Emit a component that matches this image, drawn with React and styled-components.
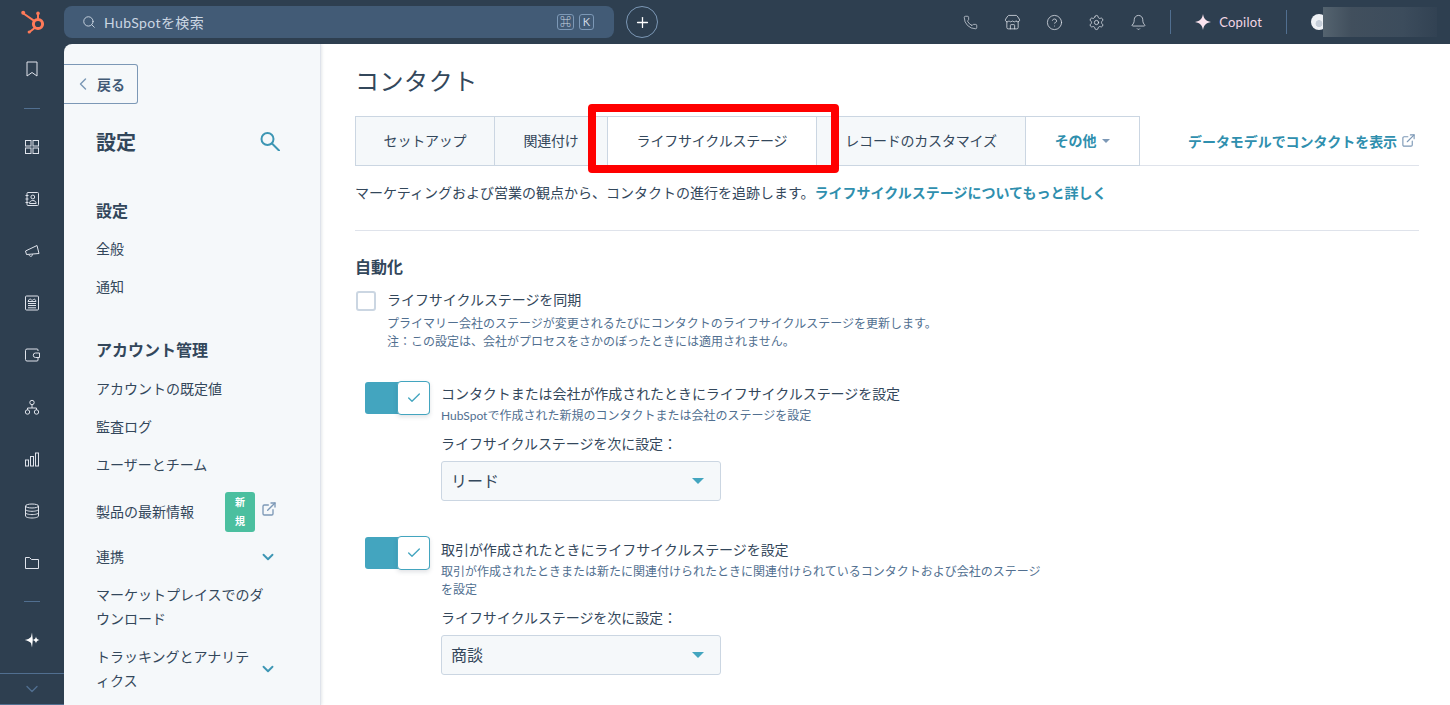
import React from 'react';
import styled, { createGlobalStyle } from 'styled-components';
import { ChevronDown, ChevronLeft, Search, Phone, Store, CircleHelp, Settings, Bell, Plus, Check, ExternalLink } from 'lucide-react';

const GlobalStyle = createGlobalStyle`
  html, body { margin: 0; padding: 0; height: 100%; overflow: hidden; }
  body { font-family: Lato, "Noto Sans CJK JP", sans-serif; color: #33475b; background: #fff; }
`;

const Page = styled.div`
  position: relative;
  width: 1450px;
  height: 705px;
  overflow: hidden;
  background: #2e3f50;
`;

const TopBar = styled.header`
  height: 44px;
  display: flex;
  align-items: center;
`;

const LogoCell = styled.div`
  width: 64px;
  height: 44px;
  box-sizing: border-box;
  padding: 9px 0 0 19px;
`;

const SearchBox = styled.div`
  width: 550px;
  height: 32px;
  box-sizing: border-box;
  background: #425b76;
  border-radius: 8px;
  display: flex;
  align-items: center;
  padding: 0 20px 0 18px;
  color: #cbd6e2;
  font-size: 14px;
  gap: 8px;
`;

const SearchText = styled.span`
  flex: 1;
  padding-bottom: 1px;
  letter-spacing: 0.4px;
`;

const Kbd = styled.span`
  width: ${p => p.$w}px;
  height: 16px;
  box-sizing: border-box;
  border: 1px solid #7c98b6;
  border-radius: 3px;
  font-size: 11px;
  line-height: 14px;
  text-align: center;
  margin-left: -3px;
`;

const PlusButton = styled.button`
  width: 32px;
  height: 32px;
  margin-left: 12px;
  padding: 0;
  background: transparent;
  border: 1px solid #7c98b6;
  border-radius: 50%;
  color: #fff;
  display: flex;
  align-items: center;
  justify-content: center;
`;

const TopRight = styled.div`
  margin-left: auto;
  display: flex;
  align-items: center;
  color: #dfe3eb;
  height: 44px;
`;

const TopIcon = styled.div`
  width: 42px;
  display: flex;
  justify-content: center;
`;

const VLine = styled.div`
  width: 1px;
  height: 24px;
  margin-left: ${p => p.$ml || 0}px;
  background: #516f90;
`;

const CopilotWrap = styled.div`
  display: flex;
  align-items: center;
  gap: 8px;
  padding: 0 24px;
  color: #f3d6e4;
  font-size: 13px;
  letter-spacing: 0.2px;
`;

const AccountWrap = styled.div`
  width: 139px;
  height: 30px;
  margin-left: 24px;
  display: flex;
  align-items: center;
  position: relative;
`;

const Avatar = styled.div`
  width: 16px;
  height: 16px;
  border-radius: 50%;
  background: radial-gradient(circle at 50% 60%, #c5ced9 0 25%, #eef1f5 30%);
`;

const Blur = styled.div`
  position: absolute;
  left: 12px;
  top: 0;
  width: 114px;
  height: 30px;
  background: linear-gradient(90deg, #54636f 0%, #414f5d 25%, #3c4c5c 70%, #324253 100%);
`;

const Body = styled.div`
  display: flex;
  height: 661px;
`;

const Rail = styled.nav`
  width: 64px;
  flex: none;
  display: flex;
  flex-direction: column;
  align-items: center;
  color: #dfe3eb;
`;

const RailItem = styled.div`
  height: 52px;
  width: 64px;
  flex: none;
  display: flex;
  align-items: center;
  justify-content: center;
`;

const RailTop = styled(RailItem)`
  height: 50px;
`;

const RailSep = styled.div`
  width: 16px;
  height: 1px;
  flex: none;
  background: #516f90;
  margin: ${p => p.$m};
`;

const RailFoot = styled.div`
  margin-top: auto;
  width: 64px;
  height: 32px;
  box-sizing: border-box;
  border-top: 1px solid #516f90;
  border-bottom: 1px solid #516f90;
  display: flex;
  align-items: center;
  justify-content: center;
  color: #516f90;
`;

const Side = styled.aside`
  width: 257px;
  flex: none;
  box-sizing: border-box;
  background: #f5f8fa;
  border-top-left-radius: 8px;
  border-right: 1px solid #dfe3eb;
  box-shadow: 1px 0 3px rgba(45, 62, 80, 0.12);
  z-index: 1;
  overflow: hidden;
  padding-top: 20px;
`;

const BackButton = styled.div`
  width: 74px;
  height: 40px;
  box-sizing: border-box;
  border: 1px solid #7c98b6;
  border-left: none;
  border-radius: 0 3px 3px 0;
  display: flex;
  align-items: center;
  padding-left: 9px;
  gap: 4px;
  font-size: 14px;
  font-weight: 700;
  color: #425b76;
`;

const SideHead = styled.div`
  display: flex;
  align-items: center;
  justify-content: space-between;
  margin: 17px 40px 0 32px;
  height: 40px;
`;

const SideTitle = styled.h1`
  margin: 0;
  font-size: 20px;
  font-weight: 700;
  color: #33475b;
`;

const SideSection = styled.h2`
  margin: ${p => p.$top}px 0 0 32px;
  font-size: 16px;
  line-height: 24px;
  font-weight: 700;
  color: #33475b;
`;

const SideItem = styled.div`
  display: flex;
  align-items: center;
  justify-content: space-between;
  margin: ${p => p.$mt || 0}px 0 0 32px;
  width: ${p => p.$w || 208}px;
  min-height: 38px;
  font-size: 14px;
  line-height: 24px;
  color: #33475b;
`;

const SideText = styled.span`
  flex: 1;
  padding: ${p => p.$pad || 0}px 0;
  max-width: ${p => p.$max || 'none'};
`;

const NewBadge = styled.span`
  width: 30px;
  height: 40px;
  flex: none;
  box-sizing: border-box;
  padding: 1px 8px;
  border-radius: 3px;
  background: #4bbf9f;
  color: #fff;
  font-size: 10px;
  font-weight: 700;
  line-height: 19px;
  text-align: center;
  margin-right: 6px;
`;

const LinkIconUp = styled.span`
  display: flex;
  margin: -7px -1px 0 0;
  color: #7c98b6;
`;

const Main = styled.main`
  flex: 1;
  background: #fff;
  padding: 0 31px 0 34px;
  overflow: hidden;
`;

const PageTitle = styled.h1`
  margin: 21px 0 0;
  font-size: 24px;
  line-height: 32px;
  font-weight: 400;
  letter-spacing: 0.55px;
  color: #33475b;
`;

const TabsRow = styled.div`
  display: flex;
  align-items: flex-start;
  margin-top: 19px;
  height: 49px;
  border-bottom: 1px solid #dfe3eb;
`;

const Tab = styled.div`
  box-sizing: border-box;
  height: 50px;
  padding-bottom: 2px;
  display: flex;
  align-items: center;
  justify-content: center;
  gap: 6px;
  width: ${p => p.$w}px;
  font-size: 14px;
  letter-spacing: -0.2px;
  color: ${p => (p.$more ? '#2f8fae' : '#33475b')};
  font-weight: ${p => (p.$more ? 700 : 400)};
  background: ${p => (p.$active || p.$more ? '#fff' : '#f5f8fa')};
  border: 1px solid #cbd6e2;
  border-left-width: ${p => (p.$first ? 1 : 0)}px;
`;

const Caret = styled.span`
  width: 0;
  height: 0;
  border-left: 4px solid transparent;
  border-right: 4px solid transparent;
  border-top: 4px solid #7c98b6;
  margin-top: 1px;
`;

const DataLink = styled.a`
  margin-left: auto;
  align-self: center;
  display: flex;
  align-items: center;
  gap: 4px;
  padding-right: 3px;
  font-size: 14px;
  letter-spacing: -0.07px;
  font-weight: 700;
  color: #2f8fae;
`;

const Lead = styled.p`
  margin: 15px 0 0;
  font-size: 14px;
  line-height: 24px;
  color: #33475b;
`;

const LeadLink = styled.a`
  font-weight: 700;
  color: #2f8fae;
`;

const Rule = styled.hr`
  margin: 25px 0 0;
  border: none;
  border-top: 1px solid #dfe3eb;
`;

const SectionTitle = styled.h2`
  margin: 24px 0 0;
  font-size: 16px;
  line-height: 24px;
  font-weight: 700;
  color: #33475b;
`;

const CheckRow = styled.div`
  display: flex;
  gap: 11px;
  margin: 11px 0 0 1px;
`;

const CheckBox = styled.span`
  width: 20px;
  height: 20px;
  flex: none;
  box-sizing: border-box;
  margin-top: 1px;
  background: #fff;
  border: 2px solid #cbd6e2;
  border-radius: 3px;
`;

const OptLabel = styled.div`
  font-size: 14px;
  line-height: 20px;
  letter-spacing: -0.06px;
  color: #33475b;
`;

const OptHelp = styled.div`
  margin-top: ${p => p.$mt || 0}px;
  font-size: 12px;
  line-height: 18px;
  color: #516f90;
`;

const ToggleRow = styled.div`
  display: flex;
  gap: 11px;
  margin: ${p => p.$top}px 0 0 10px;
`;

const Toggle = styled.div`
  width: 65px;
  height: 32px;
  flex: none;
  position: relative;
  background: #43a5bf;
  border-radius: 3px;
`;

const ToggleKnob = styled.span`
  position: absolute;
  right: 0;
  top: -1px;
  width: 33px;
  height: 34px;
  box-sizing: border-box;
  background: #fff;
  border: 1px solid #43a5bf;
  border-radius: 4px;
  box-shadow: 0 2px 4px rgba(45, 62, 80, 0.15);
  display: flex;
  align-items: center;
  justify-content: center;
  color: #43a5bf;
`;

const ToggleBody = styled.div`
  width: 604px;
  padding-top: ${p => p.$pt}px;
`;

const FieldLabel = styled.div`
  margin-top: 9px;
  font-size: 14px;
  line-height: 20px;
  letter-spacing: -0.06px;
  color: #33475b;
`;

const Select = styled.div`
  margin-top: 7px;
  width: 280px;
  height: 40px;
  box-sizing: border-box;
  padding: 0 16px 2px 9px;
  display: flex;
  align-items: center;
  justify-content: space-between;
  background: #f5f8fa;
  border: 1px solid #cbd6e2;
  border-radius: 3px;
  font-size: 16px;
  color: #33475b;
`;

const SelectCaret = styled.span`
  width: 0;
  height: 0;
  margin-top: 2px;
  border-left: 6px solid transparent;
  border-right: 6px solid transparent;
  border-top: 6px solid #43a5bf;
`;

const Highlight = styled.div`
  position: absolute;
  left: 588px;
  top: 104px;
  width: 251px;
  height: 69px;
  box-sizing: border-box;
  border: 8px solid #ff0000;
  border-radius: 4px;
  pointer-events: none;
`;

const Sprocket = () => (
  <svg width="26" height="26" viewBox="0 0 26 26" fill="none" stroke="#ff7a59">
    <circle cx="19" cy="15" r="4.6" strokeWidth="3" />
    <path d="M19 9.500V5M15.200 11.800 4.500 4.500M15 19.500l-4.500 3.500" strokeWidth="2" strokeLinecap="round" />
    <circle cx="19" cy="4.400" r="1.800" fill="#ff7a59" stroke="none" />
    <circle cx="4.200" cy="3.800" r="2" fill="#ff7a59" stroke="none" />
    <circle cx="10.200" cy="23" r="1.600" fill="#ff7a59" stroke="none" />
  </svg>
);

const Sparkle = ({ size, color }) => (
  <svg width={size} height={size} viewBox="0 0 16 16" fill={color}>
    <path d="M8 0c.7 4.600 2.600 6.900 8 8-5.400 1.100-7.300 3.400-8 8-.7-4.600-2.600-6.900-8-8 5.400-1.100 7.300-3.400 8-8z" />
  </svg>
);

const RailIcon = ({ children }) => (
  <svg width="16" height="16" viewBox="0 0 16 16" fill="none" stroke="currentColor" strokeWidth="1">
    {children}
  </svg>
);

const SearchGlass = () => (
  <svg width="20" height="20" viewBox="0 0 20 20" fill="none" stroke="#3d96b4" strokeWidth="2">
    <circle cx="7.500" cy="8" r="6" />
    <path d="M12 12.500 19 19.500" strokeLinecap="round" />
  </svg>
);

const railIcons = [
  <>
    <rect x="3" y="1.500" width="11.500" height="13" rx="1" />
    <circle cx="8.800" cy="6" r="1.900" />
    <path d="M5.500 12.500c0-2 1.400-3 3.300-3s3.300 1 3.300 3zM1.500 4.500h3M1.500 8h3M1.500 11.500h3" />
  </>,
  <>
    <path d="M1.500 8 13 2.500l2 8-12.500 1z" strokeLinejoin="round" />
    <path d="M5 11.500c.3 2.500 3.500 2.500 3.500-.3" />
  </>,
  <>
    <rect x="1.500" y="1" width="13" height="14" rx="1" />
    <path d="M4 6.500c1-2.500 2-3 3-2s1.500 1 2.500 0 2 0 2.500 2zM4 8.500h8M4 10.500h8M4 12.800h8" />
  </>,
  <>
    <path d="M14 4V3a1 1 0 0 0-1-1H3A1.500 1.500 0 0 0 1.500 3.500v9A1.500 1.500 0 0 0 3 14h10a1 1 0 0 0 1-1v-2.500" />
    <path d="M15.500 6H11.500a2 2 0 0 0 0 4.500h4z" />
  </>,
  <>
    <circle cx="8" cy="3.500" r="2.200" />
    <circle cx="3.500" cy="13" r="2.200" />
    <circle cx="12.500" cy="13" r="2.200" />
    <path d="M8 5.700V9M3.500 10.800V9h9v1.800" />
  </>,
  <>
    <rect x="1.500" y="9" width="3" height="6" />
    <rect x="6.500" y="5.500" width="3" height="9.500" />
    <rect x="11.500" y="2" width="3" height="13" />
  </>,
  <>
    <ellipse cx="8" cy="3" rx="6.500" ry="2" />
    <path d="M1.500 3v10c0 1.100 2.900 2 6.500 2s6.500-.9 6.500-2V3M1.500 6.300c0 1.100 2.900 2 6.500 2s6.500-.9 6.500-2M1.500 9.600c0 1.100 2.900 2 6.500 2s6.500-.9 6.500-2" />
  </>,
  <path d="M1.500 2.500v11h13v-9H7.500l-2-2z" />,
];

const App = () => (
  <Page>
    <GlobalStyle />
    <TopBar>
      <LogoCell><Sprocket /></LogoCell>
      <SearchBox>
        <Search size={14} strokeWidth={1.6} />
        <SearchText>HubSpotを検索</SearchText>
        <Kbd $w={17}>⌘</Kbd>
        <Kbd $w={15}>K</Kbd>
      </SearchBox>
      <PlusButton aria-label="作成"><Plus size={17} strokeWidth={1.8} /></PlusButton>
      <TopRight>
        <TopIcon><Phone size={15} strokeWidth={1.1} /></TopIcon>
        <TopIcon><Store size={17} strokeWidth={1.1} /></TopIcon>
        <TopIcon><CircleHelp size={17} strokeWidth={1.1} /></TopIcon>
        <TopIcon><Settings size={17} strokeWidth={1.1} /></TopIcon>
        <TopIcon><Bell size={17} strokeWidth={1.1} /></TopIcon>
        <VLine $ml={11} />
        <CopilotWrap><Sparkle size={16} color="#fbe3ee" />Copilot</CopilotWrap>
        <VLine />
        <AccountWrap>
          <Avatar />
          <Blur />
        </AccountWrap>
      </TopRight>
    </TopBar>
    <Body>
      <Rail>
        <RailTop>
          <RailIcon><path d="M3 1h10v14l-5-3.500L3 15z" /></RailIcon>
        </RailTop>
        <RailSep $m="14px 0 12px" />
        <RailItem>
          <RailIcon>
            <rect x="1.500" y="1.500" width="5.500" height="5.500" />
            <rect x="9" y="1.500" width="5.500" height="5.500" />
            <rect x="1.500" y="9" width="5.500" height="5.500" />
            <rect x="9" y="9" width="5.500" height="5.500" />
          </RailIcon>
        </RailItem>
        {railIcons.map((icon, i) => (
          <RailItem key={i}><RailIcon>{icon}</RailIcon></RailItem>
        ))}
        <RailSep $m="12px 0" />
        <RailItem>
          <svg width="16" height="16" viewBox="0 0 16 16" fill="#fff">
            <path d="M8 .5 8.800 8 8 15.500 7 11C5.500 9.500 3.500 8.500.8 8 3.500 7.500 5.500 6.500 7 5z" />
            <path d="M12 4.500c.3 2 1 3 3.500 3.500-2.500.5-3.200 1.500-3.500 3.500-.3-2-1-3-3.500-3.500 2.500-.5 3.200-1.500 3.500-3.500z" />
          </svg>
        </RailItem>
        <RailFoot><ChevronDown size={20} strokeWidth={1.6} /></RailFoot>
      </Rail>
      <Side>
        <BackButton><ChevronLeft size={20} color="#7c98b6" strokeWidth={1.7} />戻る</BackButton>
        <SideHead>
          <SideTitle>設定</SideTitle>
          <SearchGlass />
        </SideHead>
        <SideSection $top={38}>設定</SideSection>
        <SideItem $mt={7}><SideText>全般</SideText></SideItem>
        <SideItem><SideText>通知</SideText></SideItem>
        <SideSection $top={32}>アカウント管理</SideSection>
        <SideItem $mt={8}><SideText>アカウントの既定値</SideText></SideItem>
        <SideItem><SideText>監査ログ</SideText></SideItem>
        <SideItem><SideText>ユーザーとチーム</SideText></SideItem>
        <SideItem $w={180} $mt={8}>
          <SideText>製品の最新情報</SideText>
          <NewBadge>新規</NewBadge>
          <LinkIconUp><ExternalLink size={16} strokeWidth={2} /></LinkIconUp>
        </SideItem>
        <SideItem $w={181} $mt={6}>
          <SideText>連携</SideText>
          <ChevronDown size={18} color="#3d96b4" strokeWidth={2.5} />
        </SideItem>
        <SideItem $w={170}><SideText $pad={7}>マーケットプレイスでのダウンロード</SideText></SideItem>
        <SideItem $w={181}>
          <SideText $pad={7} $max="160px">トラッキングとアナリティクス</SideText>
          <ChevronDown size={18} color="#3d96b4" strokeWidth={2.5} />
        </SideItem>
      </Side>
      <Main>
        <PageTitle>コンタクト</PageTitle>
        <TabsRow>
          <Tab $first $w={140}>セットアップ</Tab>
          <Tab $w={113}>関連付け</Tab>
          <Tab $active $w={209}>ライフサイクルステージ</Tab>
          <Tab $w={209}>レコードのカスタマイズ</Tab>
          <Tab $more $w={114}>その他<Caret /></Tab>
          <DataLink>データモデルでコンタクトを表示<ExternalLink size={15} strokeWidth={1.8} color="#7c98b6" /></DataLink>
        </TabsRow>
        <Lead>
          マーケティングおよび営業の観点から、コンタクトの進行を追跡します。
          <LeadLink>ライフサイクルステージについてもっと詳しく</LeadLink>
        </Lead>
        <Rule />
        <SectionTitle>自動化</SectionTitle>
        <CheckRow>
          <CheckBox />
          <div>
            <OptLabel>ライフサイクルステージを同期</OptLabel>
            <OptHelp $mt={5}>プライマリー会社のステージが変更されるたびにコンタクトのライフサイクルステージを更新します。</OptHelp>
            <OptHelp>注：この設定は、会社がプロセスをさかのぼったときには適用されません。</OptHelp>
          </div>
        </CheckRow>
        <ToggleRow $top={31}>
          <Toggle><ToggleKnob><Check size={16} strokeWidth={2} /></ToggleKnob></Toggle>
          <ToggleBody $pt={2}>
            <OptLabel>コンタクトまたは会社が作成されたときにライフサイクルステージを設定</OptLabel>
            <OptHelp $mt={3}>HubSpotで作成された新規のコンタクトまたは会社のステージを設定</OptHelp>
            <FieldLabel>ライフサイクルステージを次に設定：</FieldLabel>
            <Select>リード<SelectCaret /></Select>
          </ToggleBody>
        </ToggleRow>
        <ToggleRow $top={36}>
          <Toggle><ToggleKnob><Check size={16} strokeWidth={2} /></ToggleKnob></Toggle>
          <ToggleBody $pt={3}>
            <OptLabel>取引が作成されたときにライフサイクルステージを設定</OptLabel>
            <OptHelp $mt={3}>取引が作成されたときまたは新たに関連付けられたときに関連付けられているコンタクトおよび会社のステージを設定</OptHelp>
            <FieldLabel>ライフサイクルステージを次に設定：</FieldLabel>
            <Select>商談<SelectCaret /></Select>
          </ToggleBody>
        </ToggleRow>
      </Main>
    </Body>
    <Highlight />
  </Page>
);

export default App;
